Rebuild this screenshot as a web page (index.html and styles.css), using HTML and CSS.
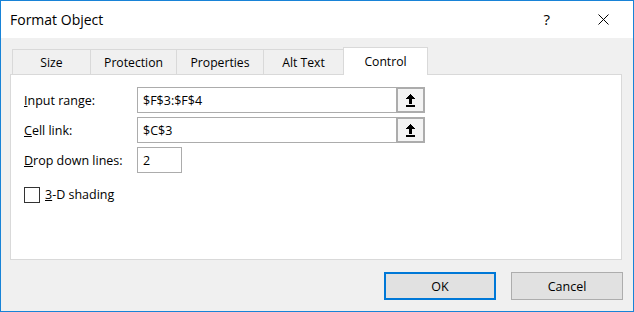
FILE: index.html
```html
<!DOCTYPE html>
<html>
<head>
<meta charset="utf-8">
<title>Format Object</title>
<link rel="stylesheet" href="styles.css">
</head>
<body>
<div class="window">
  <div class="titlebar">
    <div class="title">Format Object</div>
    <div class="tb-help">?</div>
    <div class="tb-close">
      <svg width="11" height="11" viewBox="0 0 11 11"><path d="M0.5 0.5 L10.5 10.5 M10.5 0.5 L0.5 10.5" stroke="#000" stroke-width="1" fill="none"/></svg>
    </div>
  </div>
  <div class="body">
    <div class="tabs">
      <div class="tab tab-size">Size</div>
      <div class="tab tab-protection">Protection</div>
      <div class="tab tab-properties">Properties</div>
      <div class="tab tab-alt">Alt Text</div>
      <div class="tab tab-control active">Control</div>
    </div>
    <div class="panel">
      <div class="form">
        <div class="lbl"><u>I</u>nput range:</div>
        <div class="ref-input">
          <span class="val">$F$3:$F$4</span>
          <span class="collapse"><svg width="9" height="13" viewBox="0 0 9 13" shape-rendering="crispEdges"><path d="M4.5 0 L9 5 L6 5 L6 10 L3 10 L3 5 L0 5 Z" fill="#000"/><rect x="0" y="11" width="9" height="2" fill="#000"/></svg></span>
        </div>
        <div class="lbl"><u>C</u>ell link:</div>
        <div class="ref-input">
          <span class="val">$C$3</span>
          <span class="collapse"><svg width="9" height="13" viewBox="0 0 9 13" shape-rendering="crispEdges"><path d="M4.5 0 L9 5 L6 5 L6 10 L3 10 L3 5 L0 5 Z" fill="#000"/><rect x="0" y="11" width="9" height="2" fill="#000"/></svg></span>
        </div>
        <div class="lbl"><u>D</u>rop down lines:</div>
        <div class="num-input">2</div>
      </div>
      <div class="check-row">
        <span class="checkbox"></span>
        <span class="check-label"><u>3</u>-D shading</span>
      </div>
    </div>
    <div class="buttons">
      <div class="btn btn-default">OK</div>
      <div class="btn">Cancel</div>
    </div>
  </div>
</div>
</body>
</html>
```
FILE: styles.css
```css
html, body {
  margin: 0;
  padding: 0;
}
body {
  width: 634px;
  height: 312px;
  font-family: "Open Sans", "Noto Sans", "Liberation Sans", sans-serif;
  font-size: 12.5px;
  color: #000;
  overflow: hidden;
}
.window {
  box-sizing: border-box;
  width: 634px;
  height: 312px;
  border: 1px solid #1883d7;
  background: #f0f0f0;
  display: flex;
  flex-direction: column;
}
.titlebar {
  height: 37px;
  background: #fff;
  display: flex;
  align-items: center;
  flex-shrink: 0;
}
.title {
  flex: 1;
  padding-left: 9px;
  font-size: 14px;
}
.tb-help {
  font-size: 15px;
  margin-right: 48px;
  line-height: 1;
}
.tb-close {
  width: 11px;
  height: 11px;
  margin-right: 24px;
  display: flex;
}
.body {
  padding: 9px 11px 0 9px;
  display: flex;
  flex-direction: column;
}
.tabs {
  display: flex;
  align-items: flex-end;
  height: 27px;
  margin-left: 2px;
  font-size: 12.2px;
}
.tab {
  box-sizing: border-box;
  height: 25px;
  border-top: 1px solid #d9d9d9;
  border-left: 1px solid #d9d9d9;
  background: #f0f0f0;
  display: flex;
  align-items: center;
  justify-content: center;
  padding-top: 1px;
}
.tab-size { width: 78px; }
.tab-protection { width: 86px; }
.tab-properties { width: 87px; }
.tab-alt { width: 80px; }
.tab-control { width: 85px; }
.tab.active {
  height: 28px;
  background: #fff;
  border-right: 1px solid #d9d9d9;
  margin-bottom: -1px;
  position: relative;
  z-index: 1;
  padding-top: 0;
}
.panel {
  box-sizing: border-box;
  height: 186px;
  background: #fff;
  border: 1px solid #d9d9d9;
  padding: 12px 13px;
}
.form {
  display: grid;
  grid-template-columns: 113px 288px;
  grid-auto-rows: 26px;
  row-gap: 4px;
  align-items: center;
}
.lbl {
  white-space: nowrap;
}
.ref-input {
  box-sizing: border-box;
  height: 26px;
  border: 1px solid #acacac;
  display: flex;
  align-items: stretch;
  background: #fff;
}
.val {
  flex: 1;
  padding-left: 5px;
  display: flex;
  align-items: center;
}
.collapse {
  box-sizing: border-box;
  width: 28px;
  border: 1px solid #acacac;
  border-left-width: 2px;
  background: #f4f4f4;
  display: flex;
  align-items: center;
  justify-content: center;
}
.num-input {
  box-sizing: border-box;
  width: 45px;
  height: 26px;
  border: 1px solid #acacac;
  padding-left: 5px;
  display: flex;
  align-items: center;
}
.check-row {
  display: flex;
  align-items: center;
  gap: 5px;
  margin-top: 13px;
}
.checkbox {
  box-sizing: border-box;
  width: 16px;
  height: 16px;
  border: 1px solid #333;
  background: #fff;
}
.buttons {
  display: flex;
  justify-content: flex-end;
  gap: 15px;
  margin-top: 12px;
  margin-right: -1px;
}
.btn {
  box-sizing: border-box;
  width: 112px;
  height: 28px;
  background: #e1e1e1;
  border: 1px solid #adadad;
  display: flex;
  align-items: center;
  justify-content: center;
}
.btn-default {
  border: 2px solid #0078d7;
}
```
